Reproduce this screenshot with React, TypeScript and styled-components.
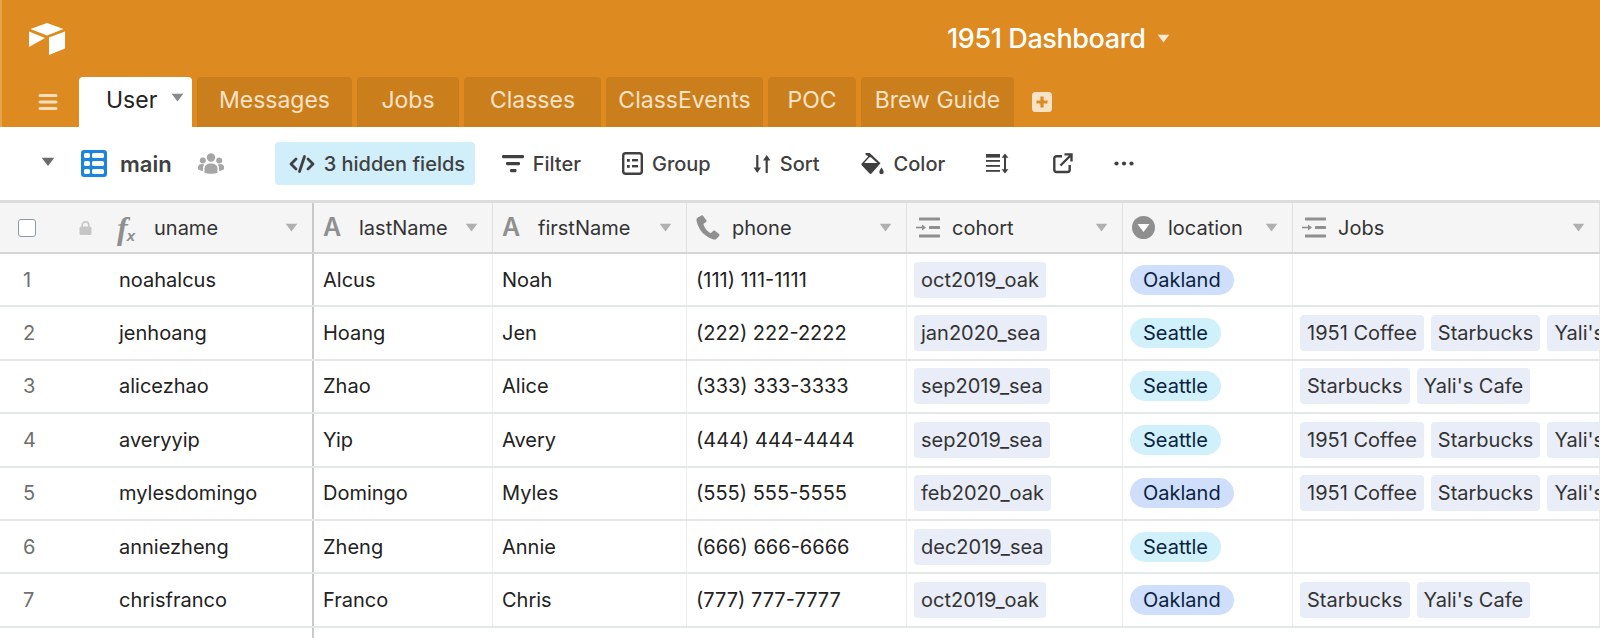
import React from 'react';
import styled, { createGlobalStyle } from 'styled-components';

const GlobalStyle = createGlobalStyle`
  html, body {
    margin: 0;
    padding: 0;
    background: #fff;
    overflow: hidden;
  }
  body {
    font-family: Inter, "Liberation Sans", sans-serif;
    -webkit-font-smoothing: antialiased;
  }
`;

////////// data //////////

const tabs = [
  { label: 'Messages', width: 155 },
  { label: 'Jobs', width: 102 },
  { label: 'Classes', width: 137 },
  { label: 'ClassEvents', width: 157 },
  { label: 'POC', width: 88 },
  { label: 'Brew Guide', width: 153 },
];

const users = [
  { id: 1, uname: 'noahalcus', last: 'Alcus', first: 'Noah', phone: '(111) 111-1111', cohort: 'oct2019_oak', location: 'Oakland', jobs: [] },
  { id: 2, uname: 'jenhoang', last: 'Hoang', first: 'Jen', phone: '(222) 222-2222', cohort: 'jan2020_sea', location: 'Seattle', jobs: ['1951 Coffee', 'Starbucks', "Yali's Cafe"] },
  { id: 3, uname: 'alicezhao', last: 'Zhao', first: 'Alice', phone: '(333) 333-3333', cohort: 'sep2019_sea', location: 'Seattle', jobs: ['Starbucks', "Yali's Cafe"] },
  { id: 4, uname: 'averyyip', last: 'Yip', first: 'Avery', phone: '(444) 444-4444', cohort: 'sep2019_sea', location: 'Seattle', jobs: ['1951 Coffee', 'Starbucks', "Yali's Cafe"] },
  { id: 5, uname: 'mylesdomingo', last: 'Domingo', first: 'Myles', phone: '(555) 555-5555', cohort: 'feb2020_oak', location: 'Oakland', jobs: ['1951 Coffee', 'Starbucks', "Yali's Cafe"] },
  { id: 6, uname: 'anniezheng', last: 'Zheng', first: 'Annie', phone: '(666) 666-6666', cohort: 'dec2019_sea', location: 'Seattle', jobs: [] },
  { id: 7, uname: 'chrisfranco', last: 'Franco', first: 'Chris', phone: '(777) 777-7777', cohort: 'oct2019_oak', location: 'Oakland', jobs: ['Starbucks', "Yali's Cafe"] },
];

////////// icons //////////

const Caret = ({ size = 12, color = '#aaa' }: { size?: number; color?: string }) => (
  <svg width={size} height={size * 0.7} viewBox="0 0 10 7"><path d="M0.5 0.5h9L5 6.5z" fill={color} /></svg>
);

const LogoIcon = () => (
  <svg width="38" height="34" viewBox="0 0 38 34">
    <path d="M19 1 L35.5 7 L19 13.5 L2.5 7 Z" fill="#fff" transform="translate(0,0)" />
    <path d="M21 15.5 L37 9.5 V26.5 L21 33 Z" fill="#fff" />
    <path d="M1 9.5 L17 16 L1 25 Z" fill="#fff" />
  </svg>
);

const MenuIcon = () => (
  <svg width="20" height="18" viewBox="0 0 20 18" fill="none" stroke="#f7dfbe" strokeWidth="3" strokeLinecap="round">
    <path d="M2 2.5h16M2 9h16M2 15.5h16" />
  </svg>
);

const PlusIcon = () => (
  <svg width="20" height="20" viewBox="0 0 20 20">
    <rect width="20" height="20" rx="3.5" fill="#f8e3c6" />
    <path d="M10 4.5v11M4.5 10h11" stroke="#dd8a20" strokeWidth="3.2" />
  </svg>
);

const GridIcon = () => (
  <svg width="26" height="27" viewBox="0 0 26 27">
    <rect width="26" height="27" rx="3" fill="#1b84dc" />
    <rect x="3" y="3" width="6" height="5" rx="1.6" fill="#fff" />
    <rect x="11" y="3" width="12" height="5" rx="1.6" fill="#fff" />
    <rect x="3" y="11" width="6" height="5" rx="1.6" fill="#fff" />
    <rect x="11" y="11" width="12" height="5" rx="1.6" fill="#fff" />
    <rect x="3" y="19" width="6" height="5" rx="1.6" fill="#fff" />
    <rect x="11" y="19" width="12" height="5" rx="1.6" fill="#fff" />
  </svg>
);

const PeopleIcon = () => (
  <svg width="26" height="21" viewBox="0 0 26 21" fill="#a6a6a6">
    <circle cx="13" cy="4.5" r="4.2" />
    <circle cx="4.8" cy="7.6" r="3" />
    <circle cx="21.2" cy="7.6" r="3" />
    <path d="M6.5 20v-4.5c0-3 2.5-5 6.5-5s6.5 2 6.5 5V20c-3.5 1-9.5 1-13 0z" />
    <path d="M0 16v-2c0-1.8 1.6-3 4-3 1 0 1.6.2 2.2.5-.8 1-1.2 2.2-1.2 3.6V18C2.5 17.8 0.8 17 0 16z" />
    <path d="M26 16v-2c0-1.8-1.6-3-4-3-1 0-1.6.2-2.2.5.8 1 1.2 2.2 1.2 3.6V18c2.5-.2 4.2-1 5-2z" />
  </svg>
);

const HiddenIcon = () => (
  <svg width="26" height="18" viewBox="0 0 26 18" fill="none" stroke="#404040" strokeWidth="2.8" strokeLinejoin="round" strokeLinecap="round">
    <path d="M7 4L2 9l5 5" />
    <path d="M19 4l5 5-5 5" />
    <path d="M15.5 1.5L10.5 16.5" />
  </svg>
);

const FilterIcon = () => (
  <svg width="22" height="19" viewBox="0 0 22 19" fill="#404040">
    <rect x="0" y="1" width="22" height="3.2" rx="1.2" />
    <rect x="4" y="8" width="14" height="3.2" rx="1.2" />
    <rect x="8" y="15" width="6.5" height="3.2" rx="1.2" />
  </svg>
);

const GroupIcon = () => (
  <svg width="21" height="23" viewBox="0 0 21 23">
    <rect x="1.2" y="1.2" width="18.6" height="20.6" rx="2.5" fill="none" stroke="#404040" strokeWidth="2.4" />
    <rect x="5" y="7" width="2.8" height="2.8" fill="#404040" />
    <rect x="10" y="7" width="6" height="2.4" fill="#404040" />
    <rect x="5" y="13" width="2.8" height="2.8" fill="#404040" />
    <rect x="10" y="13" width="6" height="2.4" fill="#404040" />
  </svg>
);

const SortIcon = () => (
  <svg width="18" height="20" viewBox="0 0 18 20" fill="#404040">
    <path d="M3.2 1h2.2v12.5H8L4.3 19 0.6 13.5h2.6z" />
    <path d="M12.6 19h2.2V6.5h2.6L13.7 1 10 6.5h2.6z" />
  </svg>
);

const ColorIcon = () => (
  <svg width="24" height="24" viewBox="0 0 24 24" fill="#404040">
    <path d="M4.5 1h4.2l10.8 10.2L10.5 21.5c-.6.6-1.4.6-2 0L0.7 13.2c-.5-.6-.5-1.2 0-1.7L7.2 4.6 4.5 2.4z" />
    <path d="M8.2 5.6L3.2 11h13L10.2 5.6c-.6-.5-1.4-.5-2 0z" fill="#fff" />
    <path d="M20.5 15.5c1.2 2 2.2 3.2 2.2 4.5a2.2 2.2 0 0 1-4.4 0c0-1.3 1-2.5 2.2-4.5z" />
  </svg>
);

const RowHeightIcon = () => (
  <svg width="23" height="21" viewBox="0 0 23 21" fill="#404040">
    <rect x="0" y="1" width="14" height="3.6" />
    <rect x="0" y="7" width="14" height="1.8" />
    <rect x="0" y="12" width="14" height="1.8" />
    <rect x="0" y="17" width="14" height="1.8" />
    <path d="M19 .5l3.4 4.2h-2.4v11.6h2.4L19 20.5l-3.4-4.2h2.4V4.7h-2.4z" />
  </svg>
);

const ShareIcon = () => (
  <svg width="20" height="21" viewBox="0 0 20 21" fill="none" stroke="#404040" strokeWidth="2.4">
    <path d="M9 3.2H3.5a2.2 2.2 0 0 0-2.2 2.2v11.4a2.2 2.2 0 0 0 2.2 2.2h11a2.2 2.2 0 0 0 2.2-2.2V12" />
    <path d="M7.5 12.5L18 2M11.5 1.4h7v7" />
  </svg>
);

const DotsIcon = () => (
  <svg width="20" height="5" viewBox="0 0 20 5" fill="#404040">
    <circle cx="2.5" cy="2.5" r="2.1" />
    <circle cx="10" cy="2.5" r="2.1" />
    <circle cx="17.5" cy="2.5" r="2.1" />
  </svg>
);

const LockIcon = () => (
  <svg width="13" height="14" viewBox="0 0 13 14">
    <path d="M3.2 6V4.2a3.3 3.3 0 0 1 6.6 0V6" fill="none" stroke="#c6c6c6" strokeWidth="1.6" />
    <rect x="0.5" y="5.5" width="12" height="8.5" rx="1.5" fill="#c6c6c6" />
  </svg>
);

const PhoneIcon = () => (
  <svg width="24" height="25" viewBox="0 0 24 25" fill="#8f8f8f">
    <path d="M5.5 0.5L1.8 2.6C0.6 3.4.3 4.8.6 6.2c1.3 5 3.4 9 6.6 12.2 3.2 3 7 5 10.4 6 1.2.3 2.2.1 3-.7l2.7-3c.4-.5.4-1 0-1.4l-4.4-3.6c-.5-.4-1-.4-1.5 0l-2.2 2c-.4.3-.8.3-1.3 0-3-1.8-5-4.4-6.3-8-.2-.5-.1-.9.3-1.2l2.2-1.6c.5-.4.6-.9.4-1.5L7.2 1c-.3-.6-1-.8-1.7-.5z" />
  </svg>
);

const MultiIcon = () => (
  <svg width="24" height="21" viewBox="0 0 24 21" fill="#8f8f8f">
    <rect x="3" y="0.5" width="21" height="3" rx="0.5" />
    <rect x="13" y="9" width="11" height="3" rx="0.5" />
    <rect x="3" y="17.5" width="21" height="3" rx="0.5" />
    <rect x="0" y="9.7" width="7" height="1.6" />
    <path d="M6 7.5l4 3-4 3z" />
  </svg>
);

const SelectIcon = () => (
  <svg width="23" height="23" viewBox="0 0 23 23">
    <circle cx="11.5" cy="11.5" r="11.5" fill="#8f8f8f" />
    <path d="M5.5 8h12l-6 8z" fill="#fff" />
  </svg>
);

////////// components //////////

const columns = '314px 179px 194px 220px 216px 170px 307px';

const NameHeader = ({ icon, label, caretGap }: { icon: React.ReactNode; label: string; caretGap?: boolean }) => (
  <HeaderCell>
    <FieldIcon>{icon}</FieldIcon>
    <HeaderLabel>{label}</HeaderLabel>
    <HeaderCaret><Caret size={13} color="#b0b0b0" /></HeaderCaret>
  </HeaderCell>
);

const App: React.FC = () => {
  return (
    <Root>
      <GlobalStyle />
      <TopBar>
        <TitleRow>
          <LogoBox><LogoIcon /></LogoBox>
          <BaseTitle>
            1951 Dashboard
            <Caret size={13} color="#fbe9d2" />
          </BaseTitle>
        </TitleRow>
        <TabRow>
          <MenuBox><MenuIcon /></MenuBox>
          <ActiveTab>
            User
            <Caret size={13} color="#8a8a8a" />
          </ActiveTab>
          {tabs.map((tab) => (
            <Tab key={tab.label} $width={tab.width}>{tab.label}</Tab>
          ))}
          <AddTab><PlusIcon /></AddTab>
        </TabRow>
      </TopBar>

      <Toolbar>
        <ViewCaret><Caret size={14} color="#6b6b6b" /></ViewCaret>
        <GridIcon />
        <ViewName>main</ViewName>
        <PeopleBox><PeopleIcon /></PeopleBox>
        <HiddenButton><HiddenIcon />3 hidden fields</HiddenButton>
        <ToolButton $left={27}><FilterIcon />Filter</ToolButton>
        <ToolButton $left={41}><GroupIcon />Group</ToolButton>
        <ToolButton $left={42}><SortIcon />Sort</ToolButton>
        <ToolButton $left={41}><ColorIcon />Color</ToolButton>
        <ToolIcon $left={41}><RowHeightIcon /></ToolIcon>
        <ToolIcon $left={44}><ShareIcon /></ToolIcon>
        <ToolIcon $left={41}><DotsIcon /></ToolIcon>
      </Toolbar>

      <Table>
        <HeaderRow>
          <PrimaryHeader>
            <CheckBox />
            <LockBox><LockIcon /></LockBox>
            <FormulaMark>f<sub>x</sub></FormulaMark>
            <HeaderLabel>uname</HeaderLabel>
            <HeaderCaret><Caret size={13} color="#b0b0b0" /></HeaderCaret>
          </PrimaryHeader>
          <NameHeader icon={<LetterMark>A</LetterMark>} label="lastName" />
          <NameHeader icon={<LetterMark>A</LetterMark>} label="firstName" />
          <NameHeader icon={<PhoneIcon />} label="phone" />
          <NameHeader icon={<MultiIcon />} label="cohort" />
          <NameHeader icon={<SelectIcon />} label="location" />
          <NameHeader icon={<MultiIcon />} label="Jobs" />
        </HeaderRow>

        {users.map((user) => (
          <Row key={user.id}>
            <PrimaryCell>
              <RowNumber>{user.id}</RowNumber>
              {user.uname}
            </PrimaryCell>
            <Cell>{user.last}</Cell>
            <Cell>{user.first}</Cell>
            <Cell>{user.phone}</Cell>
            <Cell $tight><Chip>{user.cohort}</Chip></Cell>
            <Cell $tight><Pill $location={user.location}>{user.location}</Pill></Cell>
            <Cell $tight>
              {user.jobs.map((job) => <Chip key={job}>{job}</Chip>)}
            </Cell>
          </Row>
        ))}
        <TrailingRow><TrailingPrimary /></TrailingRow>
      </Table>
    </Root>
  );
};

// styled components

const Root = styled.div`
  width: 1600px;
  height: 638px;
  overflow: hidden;
  background: #fff;
`;

// top bar

const TopBar = styled.header`
  height: 127px;
  background: #dd8a20;
  border-left: 2px solid #e7a24e;
  box-sizing: border-box;
  display: flex;
  flex-direction: column;
`;

const TitleRow = styled.div`
  height: 77px;
  display: flex;
  align-items: center;
`;

const LogoBox = styled.div`
  margin-left: 26px;
  margin-top: 0;
  display: flex;
`;

const BaseTitle = styled.div`
  margin-left: 881px;
  display: flex;
  align-items: center;
  gap: 11px;
  color: #fff;
  font-size: 27px;
  font-weight: 500;
  letter-spacing: -0.4px;
`;

const TabRow = styled.div`
  height: 50px;
  display: flex;
  align-items: flex-end;
`;

const MenuBox = styled.div`
  width: 77px;
  height: 50px;
  box-sizing: border-box;
  padding: 16px 0 0 36px;
`;

const ActiveTab = styled.div`
  width: 113px;
  height: 50px;
  box-sizing: border-box;
  padding: 0 0 4px 27px;
  display: flex;
  align-items: center;
  gap: 14px;
  background: #fff;
  border-radius: 4px 4px 0 0;
  color: #222;
  font-size: 23px;
  svg { margin-top: -5px; }
`;

const Tab = styled.div<{ $width: number }>`
  width: ${(props) => props.$width}px;
  height: 50px;
  margin-left: 5px;
  padding-bottom: 4px;
  box-sizing: border-box;
  display: flex;
  align-items: center;
  justify-content: center;
  background: #cb7e1c;
  border-radius: 4px 4px 0 0;
  color: #f9e3c8;
  font-size: 23px;
`;

const AddTab = styled.div`
  margin-left: 18px;
  height: 50px;
  padding-top: 15px;
  box-sizing: border-box;
`;

// toolbar

const Toolbar = styled.div`
  height: 73px;
  box-sizing: border-box;
  padding-left: 41px;
  display: flex;
  align-items: center;
  color: #404040;
  font-size: 20px;
`;

const ViewCaret = styled.div`
  width: 40px;
  display: flex;
  margin-top: -3px;
`;

const ViewName = styled.div`
  margin-left: 13px;
  font-size: 22px;
  font-weight: 600;
`;

const PeopleBox = styled.div`
  margin-left: 26px;
  display: flex;
`;

const HiddenButton = styled.div`
  margin-left: 51px;
  width: 200px;
  height: 43px;
  box-sizing: border-box;
  padding-left: 14px;
  display: flex;
  align-items: center;
  gap: 9px;
  background: #d1effb;
  border-radius: 4px;
  font-weight: 500;
`;

const ToolButton = styled.div<{ $left: number }>`
  margin-left: ${(props) => props.$left}px;
  display: flex;
  align-items: center;
  gap: 9px;
  font-weight: 500;
`;

const ToolIcon = styled.div<{ $left: number }>`
  margin-left: ${(props) => props.$left}px;
  display: flex;
`;

// table

const Table = styled.div`
  border-top: 3px solid #dcdcdc;
`;

const HeaderRow = styled.div`
  display: grid;
  grid-template-columns: ${columns};
  height: 51px;
  box-sizing: border-box;
  background: #f5f5f5;
  border-bottom: 2px solid #d5d5d5;
`;

const HeaderCell = styled.div`
  display: flex;
  align-items: center;
  box-sizing: border-box;
  padding: 0 14px 0 9px;
  border-right: 1px solid #dde1e3;
  font-size: 20px;
  color: #333;
`;

const PrimaryHeader = styled(HeaderCell)`
  padding-left: 18px;
  border-right: 2px solid #c9c9c9;
`;

const CheckBox = styled.div`
  width: 18px;
  height: 18px;
  box-sizing: border-box;
  border: 1.5px solid #8c9aa3;
  border-radius: 3px;
  background: #fff;
`;

const LockBox = styled.div`
  margin-left: 43px;
  display: flex;
`;

const FormulaMark = styled.span`
  margin-left: 25px;
  width: 32px;
  color: #8f8f8f;
  font-family: "Liberation Serif", serif;
  font-style: italic;
  font-weight: 700;
  font-size: 32px;
  line-height: 1;
  sub {
    font-size: 15px;
    font-family: "Liberation Sans", sans-serif;
    vertical-align: -2px;
    line-height: 0;
    margin-left: -1px;
  }
`;

const FieldIcon = styled.span`
  width: 31px;
  margin-right: 0;
  display: flex;
  align-items: center;
  flex: none;
`;

const LetterMark = styled.span`
  color: #8f8f8f;
  font-size: 25px;
  font-weight: 600;
  line-height: 1;
`;

const HeaderLabel = styled.span`
  margin-left: 5px;
  white-space: nowrap;
`;

const HeaderCaret = styled.span`
  margin-left: auto;
  display: flex;
`;

const Row = styled.div`
  display: grid;
  grid-template-columns: ${columns};
  height: 53.4px;
  box-sizing: border-box;
  border-bottom: 2px solid #e4e7e8;
`;

const Cell = styled.div<{ $tight?: boolean }>`
  display: flex;
  align-items: center;
  gap: 7px;
  box-sizing: border-box;
  padding-left: ${(props) => (props.$tight ? 7 : 9)}px;
  border-right: 1px solid #ebeded;
  overflow: hidden;
  white-space: nowrap;
  font-size: 20px;
  color: #222;
`;

const PrimaryCell = styled(Cell)`
  padding-left: 0;
  border-right: 2px solid #c9c9c9;
`;

const RowNumber = styled.span`
  width: 119px;
  box-sizing: border-box;
  padding-left: 23px;
  margin-right: -7px;
  color: #6f6f6f;
  flex: none;
`;

const Chip = styled.span`
  flex: none;
  height: 36px;
  box-sizing: border-box;
  padding: 0 7px;
  display: flex;
  align-items: center;
  background: #e9edf8;
  border-radius: 4px;
  color: #333;
`;

const Pill = styled.span<{ $location: string }>`
  flex: none;
  height: 30px;
  padding: 0 13px;
  display: flex;
  align-items: center;
  background: ${(props) => (props.$location === 'Oakland' ? '#cfdffb' : '#d0f0fb')};
  border-radius: 15px;
  color: #0b1f3f;
`;

const TrailingRow = styled.div`
  display: grid;
  grid-template-columns: ${columns};
  height: 30px;
`;

const TrailingPrimary = styled.div`
  border-right: 2px solid #c9c9c9;
`;

export default App;
